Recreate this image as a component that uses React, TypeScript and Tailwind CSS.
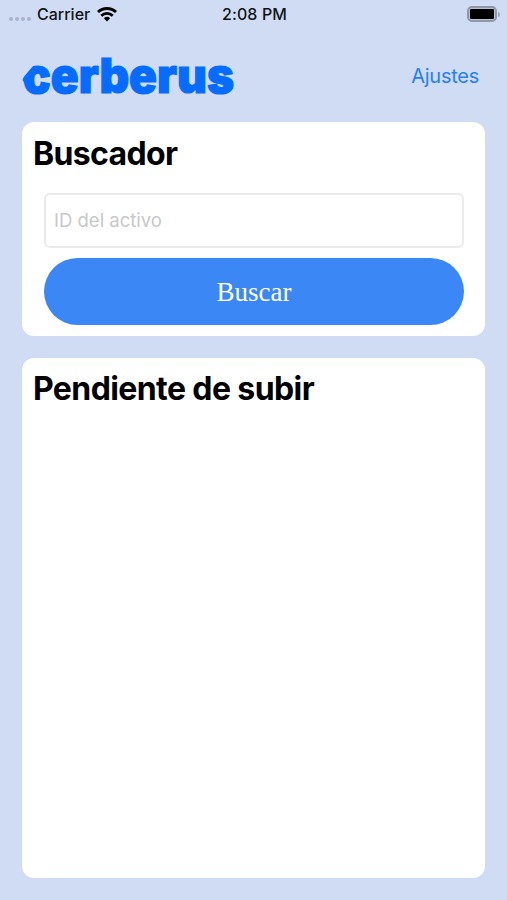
import React from 'react';

const Wordmark = () => (
  <svg width="220" height="76" viewBox="0 -8 220 76" className="block" role="img" aria-label="cerberus">
    <text
      x="1"
      y="48"
      textLength="211"
      lengthAdjust="spacingAndGlyphs"
      fontFamily="Inter, 'Liberation Sans', sans-serif"
      fontWeight="900"
      fontSize="48"
      fill="#056cff"
      stroke="#056cff"
      strokeWidth="1.2"
    >
      cerberus
    </text>
    {/* slanted shoulder of the "c" */}
    <path d="M-1 18h14.5L0 34z" fill="#cfdcf3" />
    <path d="M12.5 21.5L1.5 32.5Q0 34.5 1.5 36.5L5 41l5-8 5-5z" fill="#056cff" />
  </svg>
);

const WifiIcon = () => (
  <svg width="20" height="15" viewBox="0 0 20 15" fill="none" stroke="#000" strokeWidth="2.8">
    <path d="M1 5.1a13 13 0 0 1 18 0" />
    <path d="M4.3 8.7a8.3 8.3 0 0 1 11.4 0" />
    <path d="M10 14.5l-3.1-3.2a4.5 4.5 0 0 1 6.2 0z" fill="#000" stroke="none" />
  </svg>
);

const StatusBar = () => (
  <div className="grid h-[28px] grid-cols-3 items-center pl-[9px] pr-[7px] text-[16px] font-medium text-[#101318]">
    <div className="flex items-center">
      <div className="mt-[9px] flex gap-[2px]">
        {[0, 1, 2, 3].map(i => (
          <span key={i} className="size-1 rounded-full bg-[#abb4c8]" />
        ))}
      </div>
      <span className="ml-[6px] mr-[7px]">Carrier</span>
      <WifiIcon />
    </div>
    <div className="text-center tracking-[0.1px]">2:08 PM</div>
    <div className="flex items-center justify-end">
      <div className="h-4 w-[30px] rounded-[5px] border-2 border-[#8f97a8] bg-[#b8c1d4] p-px">
        <div className="h-full rounded-[1px] bg-black" />
      </div>
      <span className="ml-px h-[5px] w-[2px] rounded-r-full bg-[#a0a8b9]" />
    </div>
  </div>
);

const App: React.FC = () => {
  return (
    <div className="flex h-[900px] w-[507px] flex-col bg-[#cfdcf3] font-['Inter','Liberation_Sans',sans-serif]">
      <StatusBar />

      <header className="flex h-[94px] items-center justify-between pl-[22px] pr-[28px]">
        <Wordmark />
        <button className="pt-[2px] text-[20px] tracking-[-0.25px] text-[#2880ef]">Ajustes</button>
      </header>

      <main className="flex flex-1 flex-col gap-[22px] px-[22px] pb-[22px]">
        <section className="h-[214px] rounded-[12px] bg-white px-[11px] pt-[11px]">
          <h2 className="text-[32px] font-bold leading-[41px] tracking-[-0.65px] text-black">Buscador</h2>
          <div className="pl-[11px] pr-[10px] pt-[19px]">
            <input
              className="block h-[55px] w-full rounded-[6px] border-2 border-[#ebebeb] px-2 pb-[2px] text-[18.5px] outline-none placeholder:text-[#c8c8c9]"
              placeholder="ID del activo"
            />
            <button className="mt-[10px] block h-[67px] w-full rounded-full bg-[#3b87f5] pt-[2px] font-['Liberation_Serif',serif] text-[27px] text-white">
              Buscar
            </button>
          </div>
        </section>

        <section className="flex-1 rounded-[12px] bg-white px-[11px] pt-[11px]">
          <h2 className="text-[32px] font-bold leading-[40px] tracking-[-0.6px] text-black">Pendiente de subir</h2>
        </section>
      </main>
    </div>
  );
};

export default App;
